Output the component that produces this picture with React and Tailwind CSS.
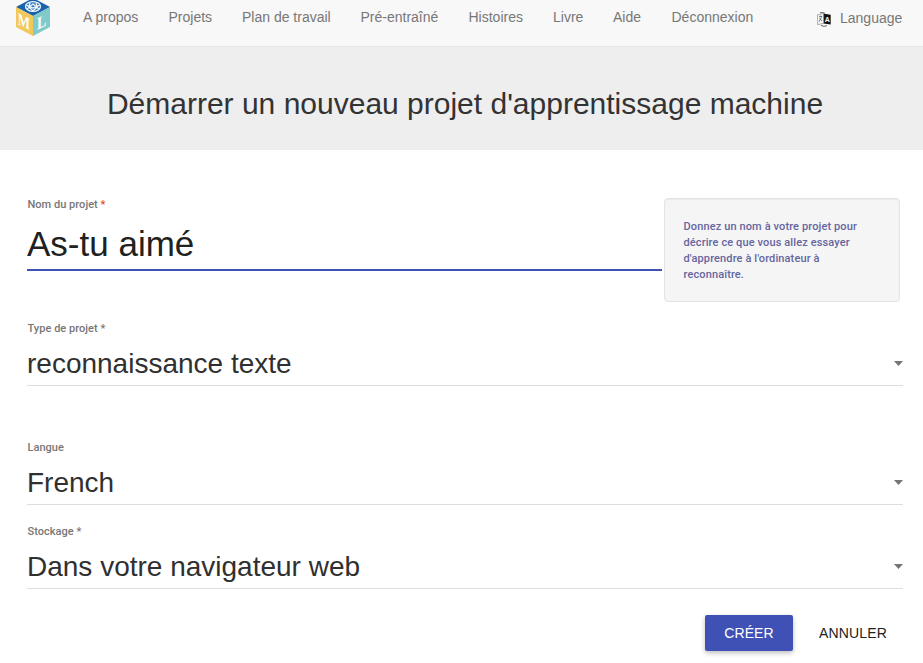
import React from "react";

const links = [
  ["A propos", "w-[85.5px]"],
  ["Projets", "w-[73.5px]"],
  ["Plan de travail", "w-[118.5px]"],
  ["Pré-entraîné", "w-[108px]"],
  ["Histoires", "w-[84.5px]"],
  ["Livre", "w-[60px]"],
  ["Aide", "w-[58.5px]"],
  ["Déconnexion", "w-[145.5px]"],
];

function Logo() {
  return (
    <svg className="mr-[32px] h-[38px] w-[36px] shrink-0" viewBox="0 0 36 38">
      <path d="M1 7 18 -2 35 7 18 16z" fill="#1b62ad" />
      <path d="M1 7 18 16V36L1 27z" fill="#f2c85a" />
      <path d="M35 7 18 16V36L35 27z" fill="#80cbc9" />
      <ellipse cx="18" cy="6.5" rx="7.8" ry="5" fill="#3d7bbb" />
      <g fill="none" stroke="#f1f8fd" strokeWidth="1.2">
        <ellipse cx="18" cy="6.5" rx="7.5" ry="4.8" />
        <path d="M11 5 18 8 25 5M12 9 18 4 24 9M15 2.5 14 7 18 11 22 7 21 2.5" />
      </g>
      <g fill="#fff" className="font-['Liberation_Serif',serif] text-[18px] font-bold">
        <text transform="matrix(.72 .34 0 .95 2.8 24.2)">M</text>
        <text transform="matrix(.78 -.36 0 .95 22 29.8)">L</text>
      </g>
    </svg>
  );
}

function TranslateIcon() {
  return (
    <svg className="mt-[12px] h-[15px] w-[14px] shrink-0" viewBox="0 0 14 15">
      <path d="M5.5 1.6 13.7 2.8V12.4L6.5 11.4z" fill="#111" />
      <path d="M.6 2.8 6.6 1.4V11.4L.6 12.6z" fill="#fafafa" stroke="#888" strokeWidth=".7" />
      <path d="M3 .8 5.5 .4 8 1.4M10 13.6 7 14.4 4 13.4" fill="none" stroke="#555" strokeWidth=".9" />
      <path d="M2 4.8 5.2 4.2M3.4 3.6 3.6 4.6M4.8 4.6 2.1 9.6M2.6 6.3 5.1 9" fill="none" stroke="#555" strokeWidth=".8" />
      <text x="7.7" y="10" fill="#fff" className="font-['Liberation_Sans',Arial,sans-serif] text-[7px] font-bold">A</text>
    </svg>
  );
}

function SelectField({ label, value, className }) {
  return (
    <div className={`flex h-[66px] flex-col border-b border-[#dedede] ${className}`}>
      <div className="h-[16px] pt-px pl-[0.5px] font-[Roboto,sans-serif] text-[11px] leading-[16px] font-medium tracking-[0.03px] text-[#777]">{label}</div>
      <div className="mt-[9px] flex h-[36px] items-center justify-between">
        <span className="pt-[2px] text-[28px] leading-[36px] text-[#303030]">{value}</span>
        <svg className="h-[5px] w-[9px]" viewBox="0 0 9 5"><path d="M0 0H9L4.5 5z" fill="#757575" /></svg>
      </div>
    </div>
  );
}

export default function App() {
  return (
    <div className="h-[663px] w-[923px] overflow-hidden bg-white font-['Liberation_Sans',Arial,sans-serif]">
      <header className="flex h-[47px] items-start border-b border-[#e7e7e7] bg-[#f8f8f8] pl-[15px] text-[14px] leading-[20px] text-[#777]">
        <Logo />
        <nav className="flex pt-[7px]">
          {links.map(([text, width]) => (
            <a key={text} className={`shrink-0 whitespace-nowrap ${width}`}>{text}</a>
          ))}
        </nav>
        <TranslateIcon />
        <a className="mt-[8px] ml-[9px]">Language</a>
      </header>

      <section className="flex h-[103px] items-center justify-center bg-[#eee] pt-[11px] pl-[7px]">
        <h1 className="text-[30px] leading-[36px] whitespace-nowrap text-[#333]">Démarrer un nouveau projet d'apprentissage machine</h1>
      </section>

      <main className="pr-[20px] pl-[27px]">
        <div className="flex h-[170px] pt-[46px]">
          <div className="h-[75px] w-[635px] border-b-2 border-[#3f51b5]">
            <div className="h-[16px] pt-px pl-[0.5px] font-[Roboto,sans-serif] text-[11px] leading-[16px] font-medium tracking-[0.03px] text-[#777]">
              Nom du projet <span className="text-[#dd4b32]">*</span>
            </div>
            <div className="mt-[12px] text-[35px] leading-[40px] text-[#212121]">As-tu aimé</div>
          </div>
          <aside className="mt-[2px] ml-[2px] h-[104px] w-[236px] rounded-[4px] border border-[#e3e3e3] bg-[#f5f5f5] pt-[20px] pl-[18.5px] font-[Roboto,sans-serif] text-[11px] leading-[16px] font-medium tracking-[0.12px] whitespace-nowrap text-[#6565a0] shadow-[inset_0_1px_1px_rgba(0,0,0,0.05)]">
            Donnez un nom à votre projet pour<br />décrire ce que vous allez essayer<br />d'apprendre à l'ordinateur à<br />reconnaître.
          </aside>
        </div>
        <SelectField label="Type de projet *" value="reconnaissance texte" className="" />
        <SelectField label="Langue" value="French" className="mt-[53px]" />
        <SelectField label="Stockage *" value="Dans votre navigateur web" className="mt-[18px]" />
        <div className="mt-[26px] mr-[6px] flex justify-end text-[14px] leading-[36px] tracking-[0.01em]">
          <button className="h-[36px] w-[88px] rounded-[2px] bg-[#3f51b5] text-white shadow-[0_2px_5px_rgba(0,0,0,0.26)]">CRÉER</button>
          <button className="ml-[16px] h-[36px] w-[88px] text-[#212121]">ANNULER</button>
        </div>
      </main>
    </div>
  );
}
